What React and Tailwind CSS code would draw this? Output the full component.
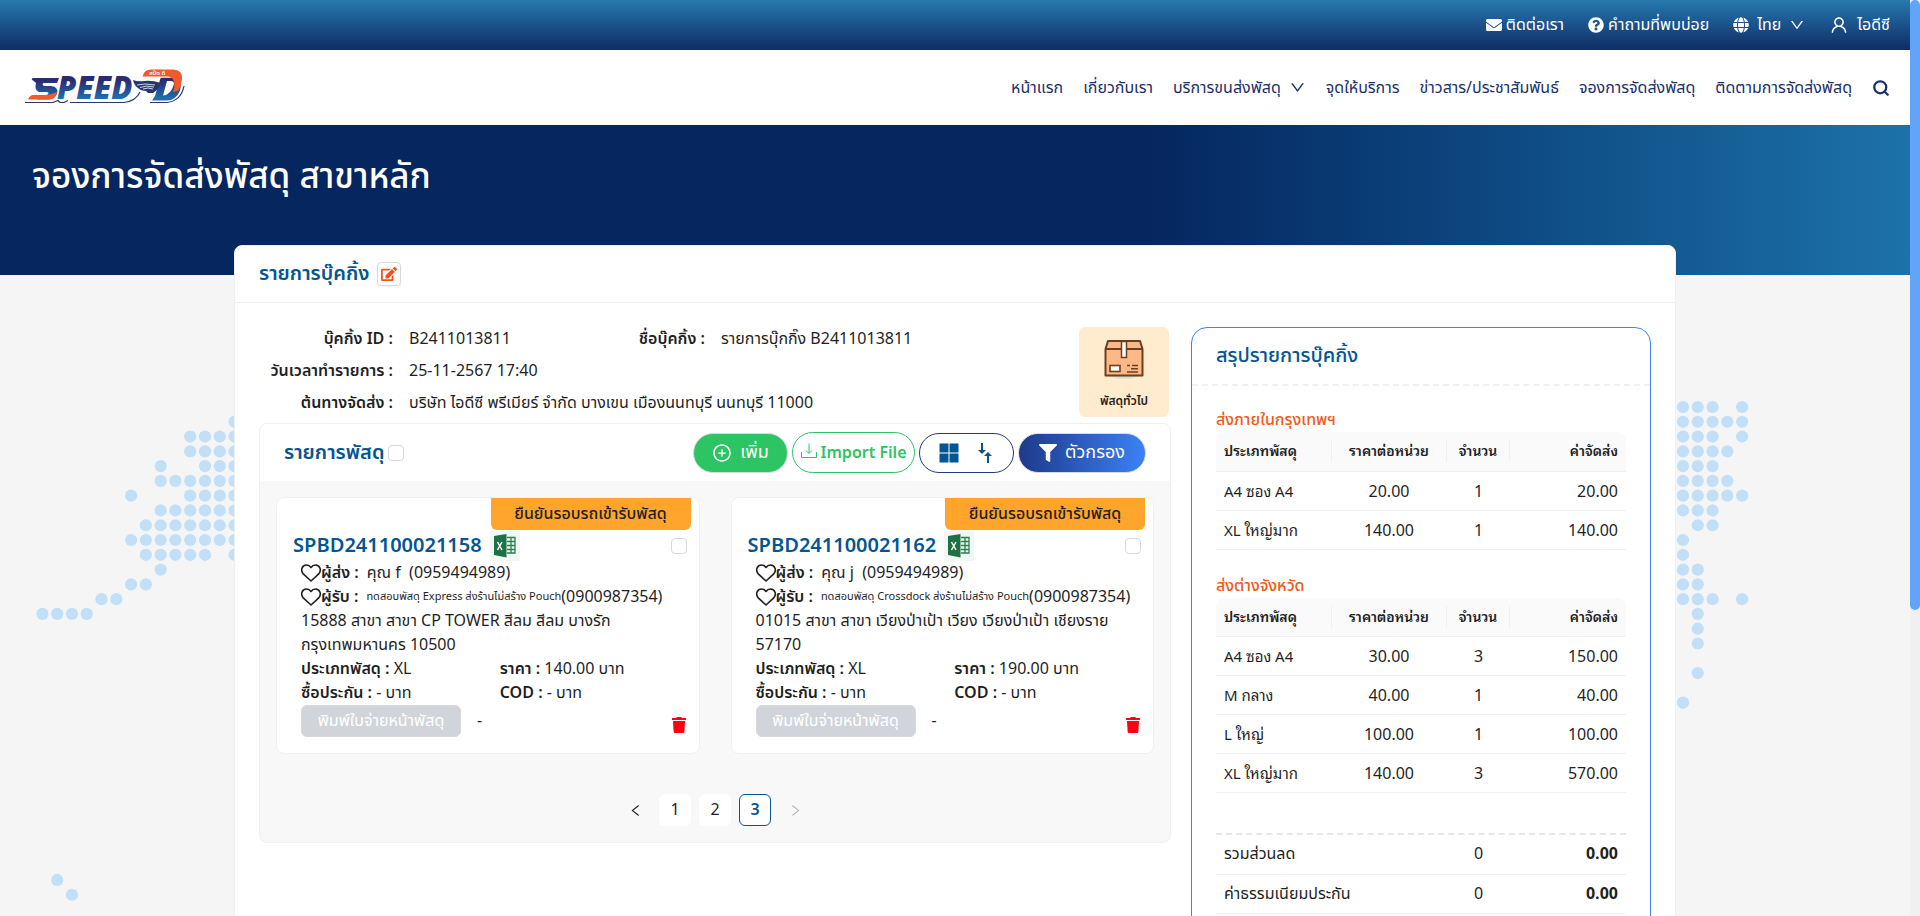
import { AiOutlineDown, AiOutlineUser, AiOutlinePlusCircle, AiOutlineLeft, AiOutlineRight } from "react-icons/ai";
import { FaEnvelope, FaQuestionCircle, FaGlobe, FaEdit, FaFilter } from "react-icons/fa";
import { Search } from "lucide-react";

// World map dots: each row is [row index, list of column ranges].
const DOT_ROWS = [
  [0, [[111, 113], [115, 115]]],
  [1, [[13, 13], [111, 115]]],
  [2, [[10, 13], [111, 113], [115, 115]]],
  [3, [[10, 13], [111, 114]]],
  [4, [[8, 8], [11, 13], [111, 113]]],
  [5, [[8, 13], [111, 114]]],
  [6, [[6, 6], [10, 13], [111, 115]]],
  [7, [[8, 13], [111, 113]]],
  [8, [[7, 13], [112, 113]]],
  [9, [[6, 13], [111, 111]]],
  [10, [[7, 11], [13, 13], [111, 111]]],
  [11, [[8, 8], [111, 112]]],
  [12, [[6, 7], [111, 112]]],
  [13, [[4, 5], [111, 113], [115, 115]]],
  [14, [[0, 3], [112, 112]]],
  [15, [[112, 112]]],
  [16, [[112, 112]]],
  [18, [[112, 112]]],
  [20, [[111, 111]]],
  [32, [[1, 1]]],
  [33, [[2, 2]]],
];
const PITCH = 14.78;

function MapDots() {
  const dots = [];
  for (const [row, ranges] of DOT_ROWS)
    for (const [from, to] of ranges)
      for (let col = from; col <= to; col++)
        dots.push(<circle key={`${row}-${col}`} cx={42.4 + col * PITCH} cy={132 + row * PITCH} r="6.1" />);
  return (
    <svg className="absolute inset-0 h-full w-full" fill="#c2dff8" viewBox="0 0 1910 641" preserveAspectRatio="xMidYMin slice" aria-hidden="true">
      {dots}
    </svg>
  );
}

function Logo() {
  return (
    <svg className="h-10 w-40 overflow-visible" viewBox="0 -3 160 40" role="img" aria-label="SPEED-D">
      <defs>
        <linearGradient id="word" gradientUnits="userSpaceOnUse" x1="0" y1="7" x2="0" y2="30">
          <stop offset="0.1" stopColor="#2b2a73" />
          <stop offset="1" stopColor="#1b78bb" />
        </linearGradient>
      </defs>
      <path d="M8 8 L12 11 M1 31.500 H29 L34 29.500 L36 31.500 H40 L44 29.500 M46 31.500 H100 Q112 30 116 21" fill="none" stroke="#33316f" strokeWidth="1.200" />
      <path d="M126 31.500 H143 Q157 30 160 15" fill="none" stroke="#33316f" strokeWidth="1.200" />
      <path d="M8 7 H35 L33 12 H20 Q17 13 20 15 H27 Q35 16 33 22.500 Q31 28.500 24 28.500 H13 L17 24 H23 Q26 22 23 21 H15 Q10 19 12 12 Z" fill="url(#word)" />
      <path d="M4 28.500 Q6 24 9 24 H23 Q29 23 33 21 Q32 28.500 24 28.500 Z" fill="#f15a2b" />
      <text x="33" y="28" fontSize="31" fontWeight="900" fontStyle="italic" fontFamily="Noto Sans, sans-serif" fill="url(#word)">PEED</text>
      <path fillRule="evenodd" d="M136.700 6.800 H149 Q159 7 156 19.500 Q152 29.500 142.700 29.500 H128 L131 25 Z M143 10 L139 24.500 Q147 24 150 13 Q150 10 147 10 Z" fill="url(#word)" />
      <path d="M118.500 5.500 Q120 -1.500 127 -1.500 H149 Q159 -1 158 8 Q157 16 154 20 L149 21 Q151 15 150 11 Q149 5.500 142.700 5.500 Z" fill="#f15a2b" />
      <path d="M109 9 Q114 11 120 10 Q128 9 137 12 L133 19 L129 22 H124 L122 20 Q117 20 114 17 Q110 14 109 9 Z" fill="#24366f" />
      <path d="M113 14 Q120 12 131 14 M116 16.500 Q122 14 130 16 M119 18 Q124 16 129 18" fill="none" stroke="#fff" strokeWidth="0.800" />
      <text x="125" y="4" fontSize="6" fontWeight="600" fontFamily="Noto Sans Thai, sans-serif" fill="#fff">สปีด ดี</text>
    </svg>
  );
}

function TopBar() {
  return (
    <div className="flex h-[50px] items-center justify-end gap-6 bg-linear-to-b from-[#277ab0] to-[#112c66] px-5 text-[16px] text-white">
      <a href="#contact" className="flex items-center gap-1"><FaEnvelope size={16} />ติดต่อเรา</a>
      <a href="#faq" className="flex items-center gap-1"><FaQuestionCircle size={16} />คำถามที่พบบ่อย</a>
      <button type="button" className="flex items-center gap-2"><FaGlobe size={16} />ไทย<AiOutlineDown size={16} /></button>
      <button type="button" className="flex items-center gap-2"><AiOutlineUser size={20} />ไอดีซี</button>
    </div>
  );
}

const NAV = ["หน้าแรก", "เกี่ยวกับเรา", "บริการขนส่งพัสดุ", "จุดให้บริการ", "ข่าวสาร/ประชาสัมพันธ์", "จองการจัดส่งพัสดุ", "ติดตามการจัดส่งพัสดุ"];

function NavBar() {
  return (
    <header className="flex h-[75px] items-center justify-between bg-white px-5">
      <a href="#home" className="pl-1"><Logo /></a>
      <nav className="flex items-center gap-5 text-[16px] text-[#1b2f6b]">
        {NAV.map((label, i) => (
          <a key={label} href="#nav" className="flex items-center gap-2">
            {label}
            {i === 2 && <AiOutlineDown size={17} />}
          </a>
        ))}
        <button type="button" aria-label="ค้นหา"><Search size={18} strokeWidth={3} /></button>
      </nav>
    </header>
  );
}

function Field({ label, children }) {
  return (
    <div className="flex items-center gap-4 leading-8">
      <dt className="w-[134px] shrink-0 text-right font-semibold whitespace-nowrap">{label} :</dt>
      <dd>{children}</dd>
    </div>
  );
}

function ParcelBox() {
  return (
    <svg className="h-10 w-10" viewBox="0 0 40 40" aria-hidden="true">
      <ellipse cx="20" cy="35.5" rx="16" ry="4" fill="#d5dcc8" />
      <path d="M4 2 H36 L38.500 10 V36.500 H1.500 V10 Z" fill="#fdb886" stroke="#6b3f22" strokeWidth="2" strokeLinejoin="round" />
      <path d="M1.500 10 H38.500" stroke="#6b3f22" strokeWidth="2" />
      <rect x="17.500" y="2.500" width="5" height="16" fill="#fff" stroke="#6b3f22" strokeWidth="1.500" />
      <rect x="6" y="26.500" width="10" height="6" fill="#fff" stroke="#6b3f22" strokeWidth="1.600" />
      <path d="M23 26.500 H26 M28 26.500 H34 M27 29.700 H34 M23 33 H34" stroke="#6b3f22" strokeWidth="1.400" />
    </svg>
  );
}

function ExcelIcon() {
  return (
    <svg className="h-[30px] w-[30px]" viewBox="0 0 30 30" role="img" aria-label="Excel">
      <rect width="30" height="30" fill="#f1f7f3" />
      <path d="M17 6.500 H25 V22 H17 M17 10.500 H25 M17 14.500 H25 M17 18.500 H25 M21 6.500 V22" fill="none" stroke="#2e7d52" strokeWidth="1.300" />
      <path d="M4 5 L16.500 3 V26.500 L4 24 Z" fill="#1e7145" />
      <path d="M7.500 11 L12 19 M12 11 L7.500 19" stroke="#fff" strokeWidth="1.500" />
    </svg>
  );
}

function Heart() {
  return (
    <svg className="h-[18px] w-5 shrink-0" viewBox="0 0 20 18" fill="none" stroke="#1f1f1f" strokeWidth="1.600" strokeLinejoin="round" aria-hidden="true">
      <path d="M10 17 L2.500 10.200 C-1 6.500 1 1 5.500 1 C7.500 1 9 2 10 3.500 C11 2 12.500 1 14.500 1 C19 1 21 6.500 17.500 10.200 Z" />
    </svg>
  );
}

function Check({ label }) {
  return <input type="checkbox" aria-label={label} className="h-4 w-4 shrink-0 appearance-none rounded border border-[#d9d9d9] bg-white" />;
}

function ParcelCard({ parcel }) {
  return (
    <article className="flex min-w-0 flex-1 flex-col rounded-lg border border-[#f0f0f0] bg-white pb-4 pr-2 pl-4 text-[16px] leading-6">
      <div className="flex h-8 w-[200px] items-center justify-center self-end rounded-b-md bg-[#ffa52c] font-medium">ยืนยันรอบรถเข้ารับพัสดุ</div>
      <div className="flex h-[31px] items-center gap-2 pt-px pr-1">
        <h3 className="text-[20px] font-semibold text-[#045591]">{parcel.id}</h3>
        <ExcelIcon />
        <span className="ml-auto flex"><Check label={`เลือก ${parcel.id}`} /></span>
      </div>
      <div className="pl-2">
        <p className="flex items-center"><Heart /><b className="font-semibold">ผู้ส่ง :</b><span className="pl-2 whitespace-pre">{parcel.sender}  (0959494989)</span></p>
        <p className="flex items-center whitespace-nowrap"><Heart /><b className="font-semibold">ผู้รับ :</b><span className="pl-2 text-[11px]">{parcel.receiver}</span>(0900987354)</p>
        <p className="h-12 pr-6">{parcel.address}</p>
        <dl className="-mr-2 grid grid-cols-2">
          <div><dt className="inline font-semibold">ประเภทพัสดุ : </dt><dd className="inline">XL</dd></div>
          <div><dt className="inline font-semibold">ราคา : </dt><dd className="inline">{parcel.price} บาท</dd></div>
          <div><dt className="inline font-semibold">ซื้อประกัน : </dt><dd className="inline">- บาท</dd></div>
          <div><dt className="inline font-semibold">COD : </dt><dd className="inline">- บาท</dd></div>
        </dl>
        <div className="flex items-center">
          <button type="button" disabled className="h-8 w-40 rounded-md border border-[#d9d9d9] bg-[#d1d5db] text-white">พิมพ์ใบจ่ายหน้าพัสดุ</button>
          <span className="pl-4">-</span>
          <button type="button" aria-label="ลบ" className="mt-2 mr-1 ml-auto">
            <svg className="h-4 w-4" viewBox="0 0 16 16" fill="#ff0012"><path d="M1 1 H5 L6 0 H10 L11 1 H15 V3 H1 Z M2 4 H14 L13.400 14.500 Q13.200 16 12 16 H4 Q2.800 16 2.600 14.500 Z" /></svg>
          </button>
        </div>
      </div>
    </article>
  );
}

const PARCELS = [
  { id: "SPBD241100021158", sender: "คุณ f", receiver: "ทดสอบพัสดุ Express ส่งร้านไม่สร้าง Pouch", address: "15888 สาขา สาขา CP TOWER สีลม สีลม บางรัก กรุงเทพมหานคร 10500", price: "140.00" },
  { id: "SPBD241100021162", sender: "คุณ j", receiver: "ทดสอบพัสดุ Crossdock ส่งร้านไม่สร้าง Pouch", address: "01015 สาขา สาขา เวียงป่าเป้า เวียง เวียงป่าเป้า เชียงราย 57170", price: "190.00" },
];

function Toolbar() {
  return (
    <div className="flex items-center gap-1 text-[16px]">
      <button type="button" className="flex h-10 w-[95px] items-center justify-center gap-2 rounded-full border border-[#d9d9d9] bg-[#2dc464] text-[18px] text-white"><AiOutlinePlusCircle size={20} />เพิ่ม</button>
      <button type="button" className="flex h-[41px] w-[123px] items-center justify-center gap-1 rounded-full border border-[#2dc464] bg-white font-semibold whitespace-nowrap text-[#2dc464]">
        <svg className="-mt-1 h-4 w-4 shrink-0" viewBox="0 0 16 16" fill="none" stroke="#2dc464" strokeWidth="1"><path d="M8 0.500 V10 M5 7.500 L8 10.500 L11 7.500 M0.500 9 V14.500 H15.500 V9" /></svg>
        Import File
      </button>
      <div className="flex h-10 w-[95px] items-center justify-center gap-4 rounded-full border border-[#1e3a8a] bg-white">
        <button type="button" aria-label="มุมมองตาราง">
          <svg className="h-5 w-5" viewBox="0 0 20 20" fill="#045591"><path d="M0.500 0.500 H9.500 V9.500 H0.500 Z M10.500 0.500 H19.500 V9.500 H10.500 Z M0.500 10.500 H9.500 V19.500 H0.500 Z M10.500 10.500 H19.500 V19.500 H10.500 Z" /></svg>
        </button>
        <button type="button" aria-label="เรียงลำดับ">
          <svg className="h-5 w-5" viewBox="0 0 20 20" fill="#045591"><path d="M6 0 H8 V7 H11 L7 11 L3 7 H6 Z M12 20 H14 V13 H17 L13 9 L9 13 H12 Z" /></svg>
        </button>
      </div>
      <button type="button" className="flex h-10 w-32 items-center justify-center gap-2 rounded-full border border-[#d9d9d9] bg-linear-to-r from-[#1e3a8a] to-[#3b82f6] text-[18px] text-white"><FaFilter size={18} />ตัวกรอง</button>
    </div>
  );
}

function ParcelPanel() {
  return (
    <section className="overflow-hidden rounded-lg border border-[#f0f0f0] bg-[#f8f8f8]">
      <div className="flex h-[57px] items-center justify-between bg-white px-6">
        <h2 className="flex items-center gap-1 text-[20px] font-semibold text-[#045591]">รายการพัสดุ<Check label="เลือกทั้งหมด" /></h2>
        <Toolbar />
      </div>
      <div className="p-4">
        <div className="flex gap-[31px]">{PARCELS.map((p) => <ParcelCard key={p.id} parcel={p} />)}</div>
        <nav aria-label="หน้า" className="mt-10 flex justify-center gap-2 text-[16px]">
          <button type="button" aria-label="ก่อนหน้า" className="flex h-8 w-8 items-center justify-center"><AiOutlineLeft size={15} /></button>
          <button type="button" className="h-8 w-8 rounded-md bg-white">1</button>
          <button type="button" className="h-8 w-8 rounded-md bg-white">2</button>
          <button type="button" aria-current="page" className="h-8 w-8 rounded-md border border-[#045591] bg-white font-semibold text-[#045591]">3</button>
          <button type="button" aria-label="ถัดไป" disabled className="flex h-8 w-8 items-center justify-center text-black/25"><AiOutlineRight size={15} /></button>
        </nav>
      </div>
    </section>
  );
}

function PriceTable({ title, rows }) {
  return (
    <>
      <h3 className="text-[16px] leading-6 font-medium text-[#f05a1a]">{title}</h3>
      <table className="w-full table-fixed font-['Noto_Sans','Noto_Sans_Thai_Looped',sans-serif] leading-[22px]">
        <thead>
          <tr className="h-[39px] border-b border-[#f0f0f0] bg-[#fafafa] text-[14px]">
            <th className="w-[115px] rounded-tl-lg px-2 text-left font-semibold">ประเภทพัสดุ</th>
            <th className="px-0"><div className="border-x border-[#f0f0f0] font-semibold">ราคาต่อหน่วย</div></th>
            <th className="w-[63px] px-0"><div className="border-r border-[#f0f0f0] font-semibold">จำนวน</div></th>
            <th className="w-[116px] rounded-tr-lg px-2 text-right font-semibold">ค่าจัดส่ง</th>
          </tr>
        </thead>
        <tbody>
          {rows.map(([type, price, count, total]) => (
            <tr key={type} className="h-[39px] border-b border-[#f0f0f0] text-[16px]">
              <td className="px-2 text-[15px]">{type}</td>
              <td className="text-center">{price}</td>
              <td className="text-center">{count}</td>
              <td className="px-2 text-right">{total}</td>
            </tr>
          ))}
        </tbody>
      </table>
    </>
  );
}

function Summary() {
  return (
    <aside className="w-[460px] shrink-0 rounded-2xl border border-[#3b82f6] pb-10">
      <h2 className="flex h-[58px] items-center border-b-2 border-dashed border-[#f0f0f0] px-6 text-[20px] font-medium text-[#045591]">สรุปรายการบุ๊คกิ้ง</h2>
      <div className="px-6 pt-[22px]">
        <PriceTable title="ส่งภายในกรุงเทพฯ" rows={[["A4 ซอง A4", "20.00", "1", "20.00"], ["XL ใหญ่มาก", "140.00", "1", "140.00"]]} />
        <div className="h-6" />
        <PriceTable title="ส่งต่างจังหวัด" rows={[["A4 ซอง A4", "30.00", "3", "150.00"], ["M กลาง", "40.00", "1", "40.00"], ["L ใหญ่", "100.00", "1", "100.00"], ["XL ใหญ่มาก", "140.00", "3", "570.00"]]} />
        <div className="mt-10 border-t-2 border-dashed border-[#e5e7eb]">
          <table className="w-full table-fixed text-[16px]">
            <tbody>
              {["รวมส่วนลด", "ค่าธรรมเนียมประกัน"].map((label) => (
                <tr key={label} className="h-[39px] border-b border-solid border-[#f0f0f0]">
                  <th className="px-2 text-left font-normal">{label}</th>
                  <td className="w-[63px] text-center">0</td>
                  <td className="w-[116px] px-2 text-right font-bold">0.00</td>
                </tr>
              ))}
            </tbody>
          </table>
        </div>
      </div>
    </aside>
  );
}

export default function App() {
  return (
    <div className="flex h-screen overflow-hidden bg-[#f0f0f0] font-['Noto_Sans_Thai','Noto_Sans',sans-serif] text-[#1f1f1f]">
      <div className="min-w-0 flex-1 overflow-hidden bg-[#f5f5f5]">
        <TopBar />
        <NavBar />
        <div className="h-[150px] bg-linear-to-r from-[#06265f] from-60% to-[#1d72aa] px-8 pt-7">
          <h1 className="text-[35px] leading-[50px] font-medium text-white">จองการจัดส่งพัสดุ สาขาหลัก</h1>
        </div>
        <div className="relative flow-root h-[641px]">
          <MapDots />
          <main className="relative mx-auto -mt-[30px] min-h-[720px] max-w-[1442px] rounded-lg border border-[#f0f0f0] bg-white">
            <div className="flex h-[57px] items-center gap-2 border-b border-[#f0f0f0] px-6">
              <h2 className="text-[20px] font-semibold text-[#045591]">รายการบุ๊คกิ้ง</h2>
              <button type="button" aria-label="แก้ไข" className="flex h-6 w-6 items-center justify-center rounded border border-[#d9d9d9] bg-white text-[#f4511e] shadow-xs"><FaEdit size={16} /></button>
            </div>
            <div className="flex items-start gap-5 p-6">
              <div className="min-w-0 flex-1">
                <div className="flex h-24 items-start justify-between pr-0.5">
                  <dl className="-mt-1 flex-1 text-[16px]">
                    <div className="flex">
                      <div className="w-[312px]"><Field label="บุ๊คกิ้ง ID">B2411013811</Field></div>
                      <Field label="ชื่อบุ๊คกิ้ง">รายการบุ๊กกิ๊ง B2411013811</Field>
                    </div>
                    <Field label="วันเวลาทำรายการ">25-11-2567 17:40</Field>
                    <Field label="ต้นทางจัดส่ง">บริษัท ไอดีซี พรีเมียร์ จำกัด บางเขน เมืองนนทบุรี นนทบุรี 11000</Field>
                  </dl>
                  <div className="flex h-[90px] w-[90px] flex-col items-center justify-between rounded-md bg-[#ffebcd] pt-3 pb-1 text-[12px] leading-6 font-semibold"><ParcelBox />พัสดุทั่วไป</div>
                </div>
                <ParcelPanel />
              </div>
              <Summary />
            </div>
          </main>
        </div>
      </div>
      <div className="w-[10px] shrink-0" aria-hidden="true">
        <div className="h-[610px] rounded-full bg-[#60a5fa]" />
      </div>
    </div>
  );
}
